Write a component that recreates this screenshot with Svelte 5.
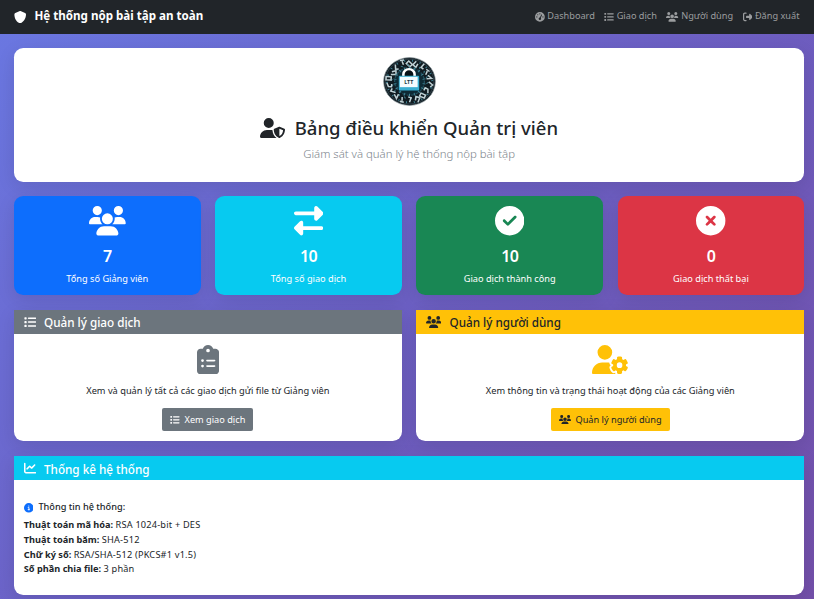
<script>
  const icons = {
    shield: [512, 'M256 0c4.6 0 9.2 1 13.4 2.9L457.7 82.8c22 9.3 38.4 31 38.3 57.2c-.5 99.2-41.3 280.7-213.6 363.2c-16.7 8-36.1 8-52.8 0C57.3 420.7 16.5 239.2 16 140c-.1-26.2 16.3-47.9 38.3-57.2L242.7 2.9C246.8 1 251.4 0 256 0z'],
    users: [640, 'M144 0a80 80 0 1 1 0 160A80 80 0 1 1 144 0zM512 0a80 80 0 1 1 0 160A80 80 0 1 1 512 0zM0 298.7C0 239.8 47.8 192 106.7 192h42.7c15.9 0 31 3.5 44.6 9.7c-1.3 7.2-1.9 14.7-1.9 22.3c0 38.2 16.8 72.5 43.3 96c-.2 0-.4 0-.7 0H21.3C9.6 320 0 310.4 0 298.7zM405.3 320c-.2 0-.4 0-.7 0c26.6-23.5 43.3-57.8 43.3-96c0-7.6-.7-15-1.9-22.3c13.6-6.3 28.7-9.7 44.6-9.7h42.7C592.2 192 640 239.8 640 298.7c0 11.8-9.6 21.3-21.3 21.3H405.3zM224 224a96 96 0 1 1 192 0 96 96 0 1 1 -192 0zM128 485.3C128 411.7 187.7 352 261.3 352H378.7C452.3 352 512 411.7 512 485.3c0 14.7-11.9 26.7-26.7 26.7H154.7c-14.7 0-26.7-11.9-26.7-26.7z'],
    exchange: [512, 'M32 96l320 0V32c0-12.9 7.8-24.6 19.8-29.6s25.7-2.2 34.9 6.9l96 96c6 6 9.4 14.1 9.4 22.6s-3.4 16.6-9.4 22.6l-96 96c-9.2 9.2-22.9 11.9-34.9 6.9s-19.8-16.6-19.8-29.6V160L32 160c-17.7 0-32-14.3-32-32s14.3-32 32-32zM480 352c17.7 0 32 14.3 32 32s-14.3 32-32 32H160v64c0 12.9-7.8 24.6-19.8 29.6s-25.7 2.2-34.9-6.9l-96-96c-6-6-9.4-14.1-9.4-22.6s3.4-16.6 9.4-22.6l96-96c9.2-9.2 22.9-11.9 34.9-6.9s19.8 16.6 19.8 29.6l0 64H480z'],
    check: [512, 'M256 512A256 256 0 1 0 256 0a256 256 0 1 0 0 512zM369 209L241 337c-9.4 9.4-24.6 9.4-33.9 0l-64-64c-9.4-9.4-9.4-24.6 0-33.9s24.6-9.4 33.9 0l47 47L335 175c9.4-9.4 24.6-9.4 33.9 0s9.4 24.6 0 33.9z'],
    xmark: [512, 'M256 512A256 256 0 1 0 256 0a256 256 0 1 0 0 512zM175 175c9.4-9.4 24.6-9.4 33.9 0l47 47 47-47c9.4-9.4 24.6-9.4 33.9 0s9.4 24.6 0 33.9l-47 47 47 47c9.4 9.4 9.4 24.6 0 33.9s-24.6 9.4-33.9 0l-47-47-47 47c-9.4 9.4-24.6 9.4-33.9 0s-9.4-24.6 0-33.9l47-47-47-47c-9.4-9.4-9.4-24.6 0-33.9z'],
    list: [512, 'M40 48C26.7 48 16 58.7 16 72v48c0 13.3 10.7 24 24 24H88c13.3 0 24-10.7 24-24V72c0-13.3-10.7-24-24-24H40zM192 64c-17.7 0-32 14.3-32 32s14.3 32 32 32H480c17.7 0 32-14.3 32-32s-14.3-32-32-32H192zm0 160c-17.7 0-32 14.3-32 32s14.3 32 32 32H480c17.7 0 32-14.3 32-32s-14.3-32-32-32H192zm0 160c-17.7 0-32 14.3-32 32s14.3 32 32 32H480c17.7 0 32-14.3 32-32s-14.3-32-32-32H192zM16 232v48c0 13.3 10.7 24 24 24H88c13.3 0 24-10.7 24-24V232c0-13.3-10.7-24-24-24H40c-13.3 0-24 10.7-24 24zM40 368c-13.3 0-24 10.7-24 24v48c0 13.3 10.7 24 24 24H88c13.3 0 24-10.7 24-24V392c0-13.3-10.7-24-24-24H40z'],
    info: [512, 'M256 512A256 256 0 1 0 256 0a256 256 0 1 0 0 512zM216 336h24V272H216c-13.3 0-24-10.7-24-24s10.7-24 24-24h48c13.3 0 24 10.7 24 24v88h8c13.3 0 24 10.7 24 24s-10.7 24-24 24H216c-13.3 0-24-10.7-24-24s10.7-24 24-24zm40-208a32 32 0 1 1 0 64 32 32 0 1 1 0-64z'],
    chart: [512, 'M64 64c0-17.7-14.3-32-32-32S0 46.3 0 64V400c0 44.2 35.8 80 80 80H480c17.7 0 32-14.3 32-32s-14.3-32-32-32H80c-8.8 0-16-7.2-16-16V64zm406.6 86.6c12.5-12.5 12.5-32.8 0-45.3s-32.8-12.5-45.3 0L320 210.7l-57.4-57.4c-12.5-12.5-32.8-12.5-45.3 0l-112 112c-12.5 12.5-12.5 32.8 0 45.3s32.8 12.5 45.3 0L240 221.3l57.4 57.4c12.5 12.5 32.8 12.5 45.3 0l128-128z'],
    logout: [512, 'M377.9 105.9L500.7 228.7c7.2 7.2 11.3 17.1 11.3 27.3s-4.1 20.1-11.3 27.3L377.9 406.1c-6.4 6.4-15 9.9-24 9.9c-18.7 0-33.9-15.2-33.9-33.9l0-62.1-128 0c-17.7 0-32-14.3-32-32l0-64c0-17.7 14.3-32 32-32l128 0 0-62.1c0-18.7 15.2-33.9 33.9-33.9c9 0 17.6 3.6 24 9.9zM160 96L96 96c-17.7 0-32 14.3-32 32l0 256c0 17.7 14.3 32 32 32l64 0c17.7 0 32 14.3 32 32s-14.3 32-32 32l-64 0c-53 0-96-43-96-96L0 128C0 75 43 32 96 32l64 0c17.7 0 32 14.3 32 32s-14.3 32-32 32z'],
    gauge: [512, 'M0 256a256 256 0 1 1 512 0A256 256 0 1 1 0 256zM288 96a32 32 0 1 0 -64 0 32 32 0 1 0 64 0zM256 416c35.3 0 64-28.7 64-64c0-17.4-6.9-33.1-18.1-44.6L366 161.7c5.3-12.1-.2-26.3-12.3-31.6s-26.3 .2-31.6 12.3L257.9 288c-.6 0-1.3 0-1.9 0c-35.3 0-64 28.7-64 64s28.7 64 64 64zM176 144a32 32 0 1 0 -64 0 32 32 0 1 0 64 0zM96 288a32 32 0 1 0 0-64 32 32 0 1 0 0 64zm352-32a32 32 0 1 0 -64 0 32 32 0 1 0 64 0z'],
    clipboard: [384, 'M192 0c-41.8 0-77.4 26.7-90.5 64H64C28.7 64 0 92.7 0 128V448c0 35.3 28.7 64 64 64H320c35.3 0 64-28.7 64-64V128c0-35.3-28.7-64-64-64H282.5C269.4 26.7 233.8 0 192 0zm0 64a32 32 0 1 1 0 64 32 32 0 1 1 0-64zM72 272a24 24 0 1 1 48 0 24 24 0 1 1 -48 0zm104-16H304c8.8 0 16 7.2 16 16s-7.2 16-16 16H176c-8.8 0-16-7.2-16-16s7.2-16 16-16zM72 368a24 24 0 1 1 48 0 24 24 0 1 1 -48 0zm88 0c0-8.8 7.2-16 16-16H304c8.8 0 16 7.2 16 16s-7.2 16-16 16H176c-8.8 0-16-7.2-16-16z'],
    userGear: [640, 'M224 0a128 128 0 1 1 0 256A128 128 0 1 1 224 0zM178.3 304h91.4c11.8 0 23.4 1.2 34.5 3.3c-2.1 18.5 7.4 35.6 21.8 44.8c-16.6 10.6-26.7 31.6-20 53.3c4 12.9 9.4 25.5 16.4 37.6s15.2 23.1 24.4 33c15.7 16.9 39.6 18.4 57.2 8.7v.9c0 9.2 2.7 18.5 7.9 26.3H29.7C13.3 512 0 498.7 0 482.3C0 383.8 79.8 304 178.3 304zM436 218.2c0-7 4.5-13.3 11.3-14.8c10.5-2.4 21.5-3.7 32.7-3.7s22.2 1.3 32.7 3.7c6.8 1.5 11.3 7.8 11.3 14.8v30.6c7.9 3.4 15.4 7.7 22.3 12.8l24.9-14.3c6.1-3.5 13.7-2.7 18.5 2.4c7.6 8.1 14.3 17.2 20.1 27.2s10.3 20.4 13.5 31c2.1 6.7-1.1 13.7-7.2 17.2l-25 14.4c.4 4 .7 8.1 .7 12.3s-.2 8.2-.7 12.3l25 14.4c6.1 3.5 9.2 10.5 7.2 17.2c-3.3 10.6-7.8 21-13.5 31s-12.5 19.1-20.1 27.2c-4.8 5.1-12.5 5.9-18.5 2.4l-24.9-14.3c-6.9 5.1-14.3 9.4-22.3 12.8l0 30.6c0 7-4.5 13.3-11.3 14.8c-10.5 2.4-21.5 3.7-32.7 3.7s-22.2-1.3-32.7-3.7c-6.8-1.5-11.3-7.8-11.3-14.8V454.8c-8-3.4-15.6-7.7-22.5-12.9l-24.7 14.3c-6.1 3.5-13.7 2.7-18.5-2.4c-7.6-8.1-14.3-17.2-20.1-27.2s-10.3-20.4-13.5-31c-2.1-6.7 1.1-13.7 7.2-17.2l24.8-14.3c-.4-4.1-.7-8.2-.7-12.4s.2-8.3 .7-12.4L343.8 325c-6.1-3.5-9.2-10.5-7.2-17.2c3.3-10.6 7.7-21 13.5-31s12.5-19.1 20.1-27.2c4.8-5.1 12.4-5.9 18.5-2.4l24.8 14.3c6.9-5.1 14.5-9.4 22.5-12.9V218.2zm92.1 133.5a48.1 48.1 0 1 0 -96.1 0 48.1 48.1 0 1 0 96.1 0z'],
    userShield: [640, 'M224 256A128 128 0 1 0 224 0a128 128 0 1 0 0 256zm-45.7 48C79.8 304 0 383.8 0 482.3C0 498.7 13.3 512 29.7 512H418.3c1.8 0 3.5-.2 5.3-.5c-76.3-55.1-99.8-141-103.1-200.2c-16.1-4.8-33.1-7.3-50.7-7.3H178.3zm308.8-78.3l-120 48C358 277.4 352 286.2 352 296c0 63.3 25.9 168.8 134.8 214.2c5.9 2.5 12.6 2.5 18.5 0C614.1 464.8 640 359.3 640 296c0-9.8-6-18.6-15.1-22.3l-120-48c-5.7-2.3-12.1-2.3-17.8 0zM591.4 312c-3.9 50.7-27.2 116.7-95.4 149.7V273.8L591.4 312z']
  };
  const nav = [
    { icon: 'gauge', text: 'Dashboard' },
    { icon: 'list', text: 'Giao dịch' },
    { icon: 'users', text: 'Người dùng' },
    { icon: 'logout', text: 'Đăng xuất' }
  ];
  const stats = [
    { icon: 'users', value: 7, label: 'Tổng số Giảng viên', tone: 'blue' },
    { icon: 'exchange', value: 10, label: 'Tổng số giao dịch', tone: 'cyan' },
    { icon: 'check', value: 10, label: 'Giao dịch thành công', tone: 'green' },
    { icon: 'xmark', value: 0, label: 'Giao dịch thất bại', tone: 'red' }
  ];
  const panels = [
    { tone: 'gray', head: 'list', title: 'Quản lý giao dịch', icon: 'clipboard', text: 'Xem và quản lý tất cả các giao dịch gửi file từ Giảng viên', button: 'Xem giao dịch' },
    { tone: 'amber', head: 'users', title: 'Quản lý người dùng', icon: 'userGear', text: 'Xem thông tin và trạng thái hoạt động của các Giảng viên', button: 'Quản lý người dùng' }
  ];
  const facts = [
    ['Thuật toán mã hóa:', 'RSA 1024-bit + DES'],
    ['Thuật toán băm:', 'SHA-512'],
    ['Chữ ký số:', 'RSA/SHA-512 (PKCS#1 v1.5)'],
    ['Số phần chia file:', '3 phần']
  ];
  const marks = [
    'M-2-2.500h3.500v5h-3.500z', 'M-2 3l1-5 3 1', 'M-2-3h4M0-2l1 4', 'M-2-2v5h4l-1-4', 'M2-3l-4 2v3h3', 'M-2 3l1-5 3 4', 'M-1-3v5h3'
  ];
  const ring = Array.from({ length: 18 }, (_, i) => ({ angle: i * 20, tilt: (i * 67) % 90 - 45, r: 18.8 + (i % 3), d: marks[(i * 3) % marks.length] }));
</script>

{#snippet icon(name, size)}
  <svg class="icon" viewBox="0 0 {icons[name][0]} 512" height={size} width={(size * icons[name][0]) / 512} fill="currentColor"><path d={icons[name][1]} /></svg>
{/snippet}

<div class="page">
  <nav>
    <div class="brand">{@render icon('shield', 12.4)}<span>Hệ thống nộp bài tập an toàn</span></div>
    <div class="links">
      {#each nav as item}
        <a href="#top">{@render icon(item.icon, 9.8)}<span>{item.text}</span></a>
      {/each}
    </div>
  </nav>

  <main>
    <header class="card hero">
      <svg class="logo" viewBox="-26 -26 52 52" preserveAspectRatio="none">
        <circle r="25.4" fill="#101b21" stroke="#8b989d" stroke-width=".7" />
        <circle r="23.8" fill="none" stroke="#48616b" stroke-width=".5" />
        <circle r="14.6" fill="#0e2a35" stroke="#23505f" stroke-width="1.200" stroke-dasharray="3 1.500" />
        {#each ring as mark}
          <path d={mark.d} transform="rotate({mark.angle}) translate(0 {-mark.r}) rotate({mark.tilt})" fill="none" stroke="#bfd0d4" stroke-width="1.500" />
          <path d="M0-16V-13M4-18l1 2M3-23v2" transform="rotate({mark.angle})" fill="none" stroke="#3f8496" stroke-width="1" />
        {/each}
        <path d="M-6-5v-2.700a5.500 5.500 0 0 1 11 0V-5" fill="#071015" stroke="#fff" stroke-width="2.500" />
        <rect x="-10.500" y="-6" width="20" height="15.500" rx="1" fill="#39aed1" />
        <rect x="-9.500" y="-5" width="17.500" height="11" fill="#f4fcff" />
        <text x="-.7" y="2.300" text-anchor="middle" font-size="5.200" font-weight="700" fill="#173845">LTT</text>
      </svg>
      <h1>{@render icon('userShield', 20)}<span>Bảng điều khiển Quản trị viên</span></h1>
      <p>Giám sát và quản lý hệ thống nộp bài tập</p>
    </header>

    <section class="stats">
      {#each stats as stat}
        <div class="card stat {stat.tone}">
          {@render icon(stat.icon, 29.4)}
          <strong>{stat.value}</strong>
          <span>{stat.label}</span>
        </div>
      {/each}
    </section>

    <section class="panels">
      {#each panels as panel}
        <article class="card panel">
          <h2 class={panel.tone}>{@render icon(panel.head, 12.2)}<span>{panel.title}</span></h2>
          <div class="body">
            <div class="big {panel.tone}-ink">{@render icon(panel.icon, 29.4)}</div>
            <p>{panel.text}</p>
            <button class={panel.tone}>{@render icon(panel.head, 9.6)}<span>{panel.button}</span></button>
          </div>
        </article>
      {/each}
    </section>

    <section class="card system">
      <h2 class="cyan">{@render icon('chart', 12.2)}<span>Thống kê hệ thống</span></h2>
      <div class="details">
        <h3>{@render icon('info', 9.6)}<span>Thông tin hệ thống:</span></h3>
        {#each facts as [name, value]}
          <p><b>{name}</b> <span>{value}</span></p>
        {/each}
      </div>
    </section>
  </main>
</div>

<style>
  :global(body) { margin: 0; overflow: hidden; }
  .page {
    height: 599px; overflow: hidden; box-sizing: border-box;
    font: 9.2px/14.7px "Noto Sans", "Open Sans", sans-serif; color: #212529;
    background: linear-gradient(135deg, #6a78e2 0%, #6c60c4 50%, #734fa9 100%);
  }
  h1, h2, h3, p { margin: 0; }
  .icon { flex: none; display: block; }
  nav { height: 33.500px; box-sizing: border-box; padding: 0 14.500px 0 14px; background: #212529; display: flex; justify-content: space-between; align-items: center; }
  .brand { display: flex; align-items: center; gap: 8px; color: #fff; font-size: 11.600px; font-weight: 700; }
  .links { display: flex; gap: 9.500px; }
  .links a { display: flex; align-items: center; gap: 2.500px; color: #9b9d9f; text-decoration: none; }
  main { padding: 14.700px 9.800px 0 14px; display: flex; flex-direction: column; gap: 14.700px; }
  .card { border-radius: 9.200px; box-shadow: 0 5px 18px rgba(0, 0, 0, .1); overflow: hidden; background: #fff; }
  .hero { height: 133.500px; box-sizing: border-box; padding-top: 9px; display: flex; flex-direction: column; align-items: center; }
  .logo { width: 53px; height: 49px; }
  h1 { display: flex; align-items: center; gap: 9.500px; margin-top: 9px; font-size: 18.550px; line-height: 26px; font-weight: 500; }
  .hero p { margin-top: 4px; font-size: 11.400px; line-height: 18px; font-weight: 300; color: #7d858c; }
  .stats { display: grid; grid-template-columns: repeat(4, 1fr); gap: 14.700px; }
  .stat { height: 98.500px; box-sizing: border-box; padding-top: 9.800px; display: flex; flex-direction: column; align-items: center; color: #fff; }
  .stat strong { margin-top: 11px; font-size: 16px; line-height: 18px; font-weight: 600; letter-spacing: -.6px; }
  .stat span { margin-top: 7px; }
  .blue { background: #0d6efd; }
  .cyan { background: #07caf0; color: #fff; }
  .green { background: #198754; }
  .red { background: #dc3545; }
  .gray { background: #6c757d; color: #fff; }
  .amber { background: #ffc107; color: #212529; }
  .gray-ink { color: #6c757d; }
  .amber-ink { color: #ffc107; }
  .panels { display: grid; grid-template-columns: 1fr 1fr; gap: 14.700px; }
  .panel { height: 131.500px; border-radius: 0 0 9.200px 9.200px; }
  h2 { height: 24.500px; padding: 0 9.800px; display: flex; align-items: center; gap: 8px; font-size: 11.700px; font-weight: 500; }
  h2 span { padding-top: 2px; }
  .body { padding-top: 10.500px; display: flex; flex-direction: column; align-items: center; }
  .body p { margin-top: 10.500px; font-size: 9.250px; }
  button { margin-top: 8.500px; height: 23.500px; padding: 0 8px; border: 0; border-radius: 2px; display: flex; align-items: center; gap: 4.500px; font: inherit; }
  button span { padding-top: 1px; }
  .system { height: 139px; border-radius: 0 0 9.200px 9.200px; }
  .details { padding: 19px 9.800px; }
  .details p span { letter-spacing: .2px; }
  h3 { display: flex; align-items: center; gap: 5px; height: 17px; margin-bottom: 2px; font-size: 9.200px; font-weight: 500; }
  h3 .icon, h3 :global(.icon) { color: #0d6efd; }
</style>
